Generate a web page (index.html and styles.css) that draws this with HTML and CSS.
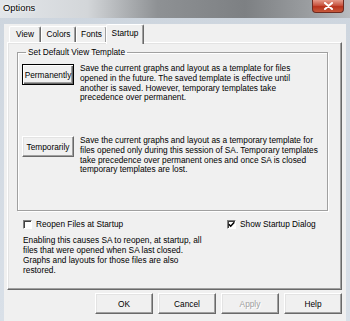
FILE: index.html
```html
<!DOCTYPE html>
<html lang="en">
<head>
    <meta charset="UTF-8">
    <title>Options</title>
    <link rel="stylesheet" href="styles.css">
</head>
<body>
    <div class="frame">
        <div class="titlebar">
            <span class="title">Options</span>
            <span class="close">
                <svg width="11" height="8" viewBox="0 0 11 8"><path d="M2 1 L9 7 M9 1 L2 7" stroke="#fff" stroke-width="2" stroke-linecap="round"/></svg>
            </span>
        </div>

        <div class="client">
            <div class="tabs">
                <span class="tab">View</span>
                <span class="tab">Colors</span>
                <span class="tab">Fonts</span>
                <span class="tab active">Startup</span>
            </div>

            <div class="panel">
                <fieldset class="group">
                    <legend>Set Default View Template</legend>
                    <div class="row first">
                        <button class="btn default">Permanently</button>
                        <p class="desc">Save the current graphs and layout as a template for files<br>opened in the future. The saved template is effective until<br>another is saved. However, temporary templates take<br>precedence over permanent.</p>
                    </div>
                    <div class="row second">
                        <button class="btn">Temporarily</button>
                        <p class="desc">Save the current graphs and layout as a temporary template for<br>files opened only during this session of SA. Temporary templates<br>take precedence over permanent ones and once SA is closed<br>temporary templates are lost.</p>
                    </div>
                </fieldset>

                <div class="checks">
                    <label class="check"><span class="box"></span>Reopen Files at Startup</label>
                    <label class="check"><span class="box">
                        <svg width="7" height="7" viewBox="0 0 7 7"><path d="M0.8 3.2 L2.7 5.2 L6.3 1.2" stroke="#000" stroke-width="1.5" fill="none"/></svg>
                    </span>Show Startup Dialog</label>
                </div>

                <p class="note">Enabling this causes SA to reopen, at startup, all<br>files that were opened when SA last closed.<br>Graphs and layouts for those files are also<br>restored.</p>
            </div>

            <div class="actions">
                <button class="btn">OK</button>
                <button class="btn">Cancel</button>
                <button class="btn disabled">Apply</button>
                <button class="btn">Help</button>
            </div>
        </div>
    </div>
</body>
</html>
```

FILE: styles.css
```css
body { margin: 0; background: #cfd8e2; font-family: "Liberation Sans", Arial, sans-serif; }
.frame { width: 350px; height: 321px; overflow: hidden; background: linear-gradient(#cdd5de, #d9e0e8); }

.titlebar { height: 18px; display: flex; align-items: flex-start; justify-content: space-between;
    background: linear-gradient(90deg, #e2e6ea 0, #d3d6d9 25%, #8e9194 45%, #7d8083 70%, #9a9da0 88%, #b9bcc0 100%); }
.title { font-size: 9.4px; line-height: 16px; padding-left: 3px; color: #000; text-shadow: 0 0 4px #fff, 0 0 2px #fff; }
.close { width: 32px; height: 13px; margin-right: 6px; display: flex; align-items: center; justify-content: center;
    background: linear-gradient(#e59a8a, #c8543f 45%, #b8321c 55%, #c75a3c); border: 1px solid #6d2a20; border-top: none; border-radius: 0 0 4px 4px; box-sizing: border-box; }

.client { margin-left: 4px; width: 342px; height: 298px; background: #f0f0f0; box-sizing: border-box; padding-bottom: 2px; }

.tabs { display: flex; align-items: flex-end; height: 18px; margin-top: 6px; padding-left: 5px; position: relative; z-index: 1; }
.tab { font-size: 8.3px; height: 16px; line-height: 15px; box-sizing: border-box; text-align: center;
    border: 1px solid; border-bottom: none; border-color: #fff #696969 transparent #fff; border-radius: 2px 2px 0 0;
    box-shadow: inset -1px 0 #a0a0a0; }
.tab:nth-child(1) { width: 32px; }
.tab:nth-child(2) { width: 35px; }
.tab:nth-child(3) { width: 31px; }
.tab.active { width: 38px; height: 20px; line-height: 16px; margin: 0 -1px -2px -1px; background: #f0f0f0; }

.panel { margin-left: 3px; width: 335px; height: 248px; box-sizing: border-box;
    border: 1px solid; border-color: #fff #696969 #696969 #fff;
    box-shadow: inset -1px -1px #a0a0a0, inset 1px 1px #e3e3e3; padding: 1px; font-size: 8.3px; }

.group { margin: 3px 12px 0 8px; padding: 7px 0 0 4px; height: 164px; box-sizing: border-box;
    border: 1px solid #a0a0a0; box-shadow: inset 1px 1px #fff, 1px 1px #fff; }
.group legend { padding: 0 2px; margin-left: 4px; line-height: 10px; }
.row { display: flex; gap: 6px; }
.row.first { height: 72px; }
.desc { margin: 0; line-height: 9.8px; white-space: nowrap; }

.btn { font-family: inherit; font-size: 8.3px; color: #000; background: #f0f0f0; padding: 0; height: 21px; flex: none;
    border: 1px solid; border-color: #fff #696969 #696969 #fff; box-shadow: inset -1px -1px #a0a0a0, inset 1px 1px #e3e3e3; }
.row .btn { width: 52px; }
.row .btn.default { border-color: #000; box-shadow: inset 1px 1px #fff, inset -1px -1px #696969, inset -2px -2px #a0a0a0; }
.btn.disabled { color: #a0a0a0; text-shadow: 1px 1px #fff; }

.checks { display: grid; grid-template-columns: 204px auto; margin: 8px 0 0 14px; }
.check { display: flex; align-items: center; gap: 4px; line-height: 10px; }
.box { width: 9px; height: 9px; box-sizing: border-box; background: #fff; display: flex; align-items: center; justify-content: center;
    border: 1px solid; border-color: #808080 #fff #fff #808080; box-shadow: inset 1px 1px #404040; }

.note { margin: 6px 0 0 14px; line-height: 10px; }

.actions { display: flex; justify-content: flex-end; gap: 5px; margin-top: 3px; padding-right: 4px; }
.actions .btn { width: 58px; }
```
